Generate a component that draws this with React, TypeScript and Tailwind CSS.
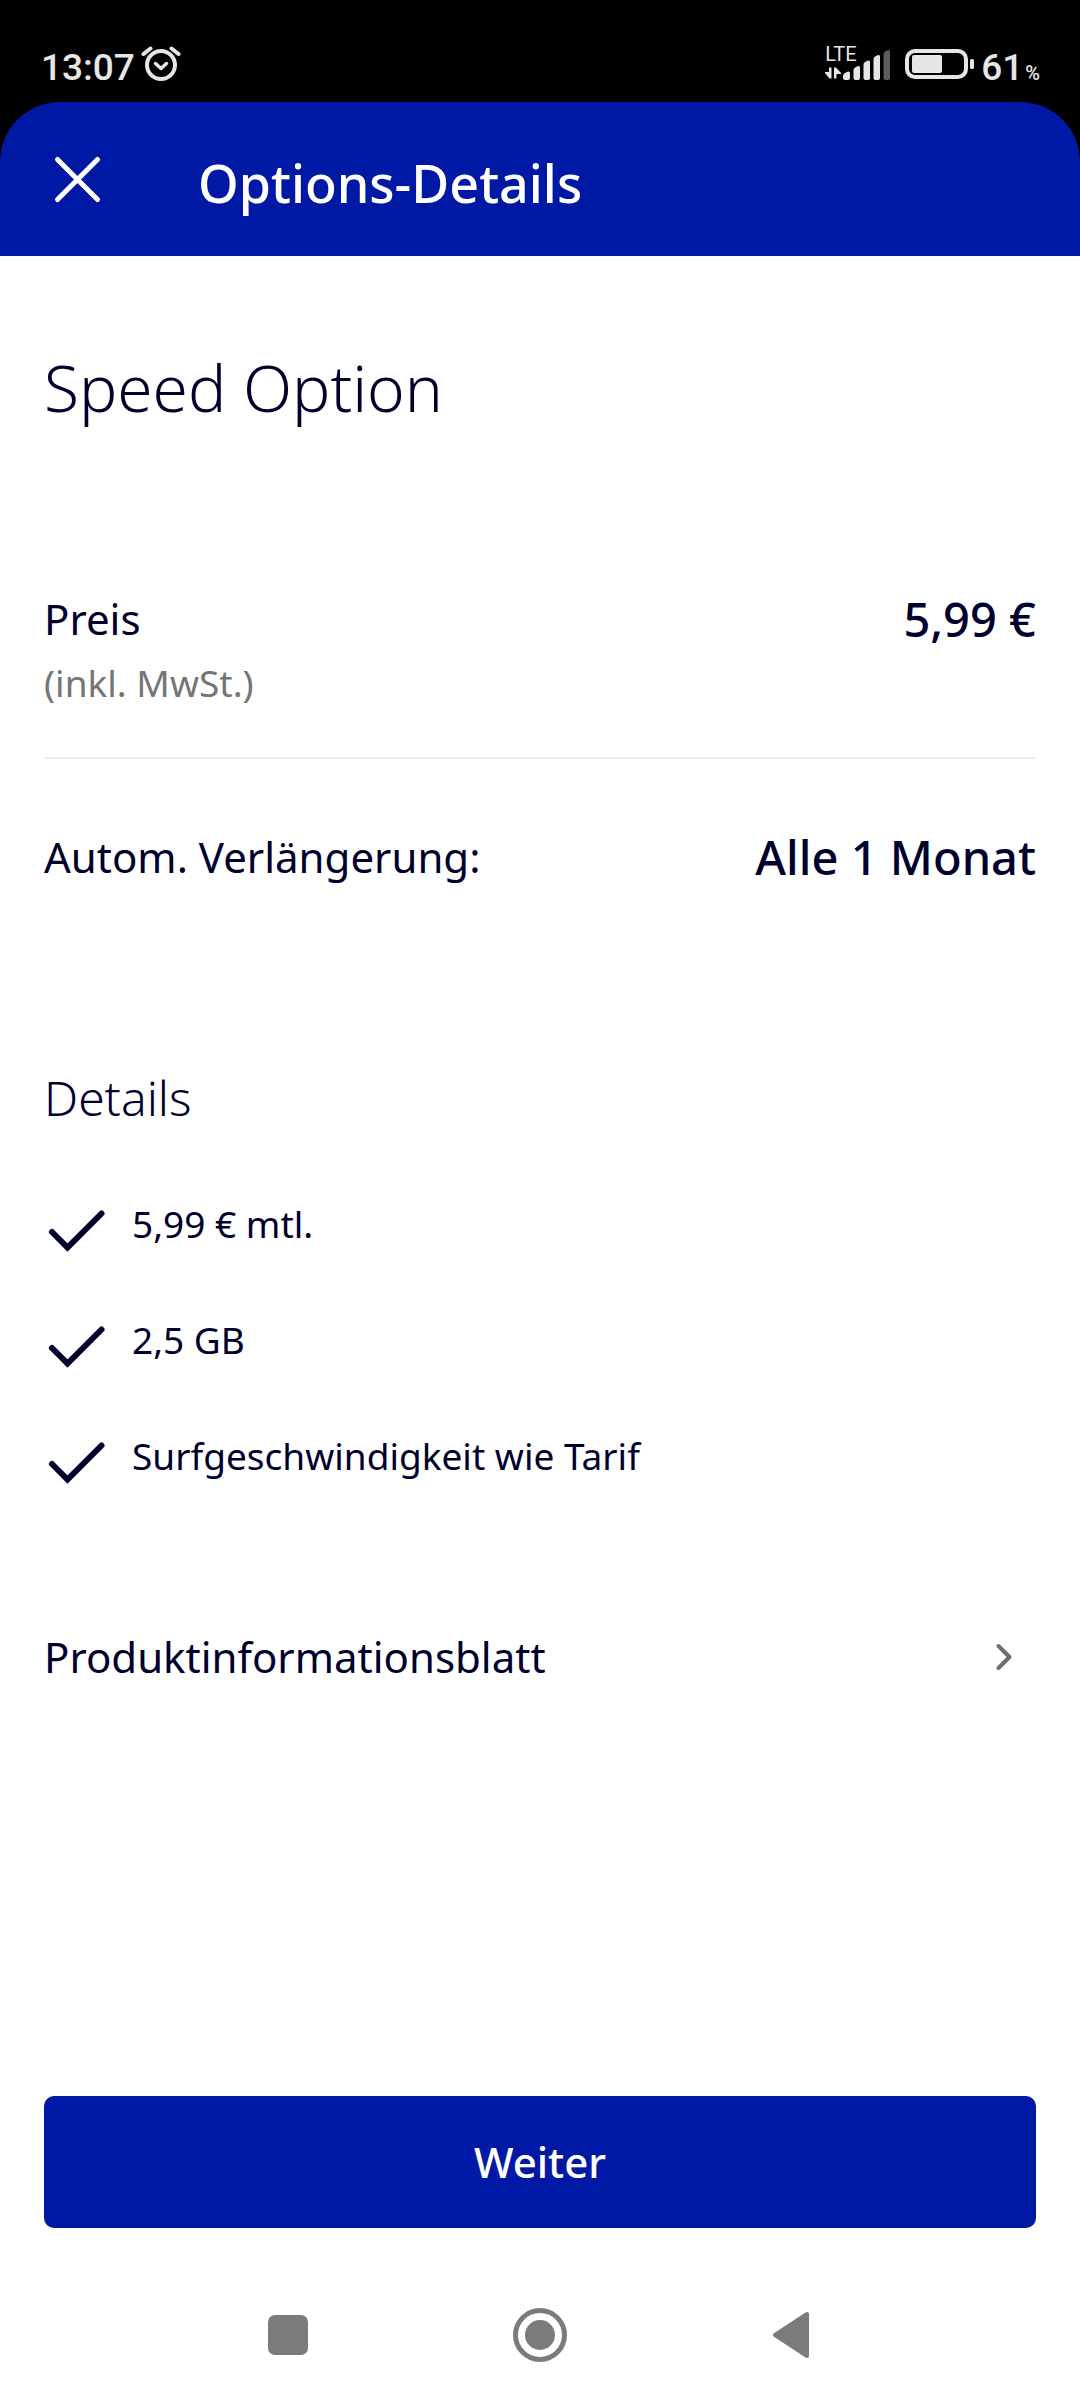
import React from "react";

const details = ["5,99 € mtl.", "2,5 GB", "Surfgeschwindigkeit wie Tarif"];

const AlarmIcon = () => (
  <svg className="h-9 w-10 self-start" viewBox="0 0 40 36" fill="none" stroke="currentColor" strokeLinecap="round" aria-hidden="true">
    <circle cx="20" cy="19" r="14" strokeWidth="4" />
    <path d="M14.500 17.500l5.500 5 5.500-5" strokeWidth="3.500" strokeLinejoin="round" />
    <path d="M2.500 8l7-5.500M37.500 8l-7-5.500" strokeWidth="4" />
  </svg>
);

const SignalIcon = () => (
  <svg className="h-8 w-12" viewBox="0 -1 48 32" fill="currentColor" aria-hidden="true">
    <path d="M0 27q0-2 2-3l3-1.500q2-.5 2 1.500v5q0 2-2 2H2q-2 0-2-2z" />
    <path d="M10.500 21q0-1.500 1.500-2.500l3-1.500q2-.5 2 1.500V29q0 2-2 2h-2.500q-2 0-2-2z" />
    <path d="M20.500 15.500q0-1.500 1.500-2.500l3-1.500q2-.5 2 1.500V29q0 2-2 2h-2.500q-2 0-2-2z" />
    <path d="M30.500 10q0-1.500 1.500-2.500l3-1.500q2-.5 2 1.500V29q0 2-2 2h-2.500q-2 0-2-2z" />
    <path d="M40.500 5q0-1.500 1.500-2.500l3-1.500q2-.5 2 1.500V29q0 2-2 2h-2.500q-2 0-2-2z" opacity=".4" />
  </svg>
);

const DataArrowsIcon = () => (
  <svg className="h-3 w-4" viewBox="0 0 16 12" fill="currentColor" aria-hidden="true">
    <path d="M4 0.500h2.500v11H4.500L0 6V5h4zM9 11.500h2.500V7H16V6L11 0.500H9z" />
  </svg>
);

const BatteryIcon = () => (
  <svg className="h-8 w-[70px]" viewBox="0 0 70 32" fill="none" aria-hidden="true">
    <rect x="2" y="3" width="59" height="26" rx="8" stroke="currentColor" strokeWidth="4" />
    <rect x="7" y="7" width="30" height="18" rx="2" fill="currentColor" />
    <rect x="65" y="11" width="4" height="10" rx="1.500" fill="currentColor" />
  </svg>
);

const CheckIcon = () => (
  <svg className="h-14 w-[62px] shrink-0" viewBox="0 0 62 56" fill="none" stroke="currentColor" strokeWidth="6" strokeLinecap="round" aria-hidden="true">
    <path d="M8 36L23.500 51.500 57.500 17.500" />
  </svg>
);

const StatusBar = () => (
  <div className="flex h-[102px] items-end justify-between pr-10 pb-4 pl-[41px] font-['Roboto',sans-serif] text-[#e6e6e6]">
    <div className="flex gap-1.5">
      <span className="pt-1 text-[37px] leading-9 font-medium">13:07</span>
      <AlarmIcon />
    </div>
    <div className="flex items-end">
      <div className="flex items-end pb-1.5">
        <div className="flex w-[18px] flex-col gap-[3px] pb-px">
          <span className="text-[20px] leading-5">LTE</span>
          <DataArrowsIcon />
        </div>
        <SignalIcon />
      </div>
      <div className="ml-[14px] pb-1.5">
        <BatteryIcon />
      </div>
      <div className="ml-1.5 flex items-baseline gap-0.5">
        <span className="text-[37px] leading-9 font-medium">61</span>
        <span className="text-[20px] leading-5 font-medium">%</span>
      </div>
    </div>
  </div>
);

const App: React.FC = () => {
  return (
    <div className="flex min-h-screen flex-col bg-white font-['Noto_Sans','Open_Sans',sans-serif] text-[#00002d]">
      <div className="bg-black">
        <StatusBar />
        <header className="flex h-[154px] items-center gap-16 rounded-t-[60px] bg-[#0019a5] px-11 text-white">
          <button type="button" aria-label="Schließen" className="flex h-[90px] w-[90px] items-center">
            <svg className="h-[90px] w-16" viewBox="0 0 64 90" fill="none" stroke="currentColor" strokeWidth="5" strokeLinecap="round">
              <path d="M13.500 25.500l40 40M53.500 25.500l-40 40" />
            </svg>
          </button>
          <h1 className="pt-2 text-[52px] leading-[60px] font-medium">Options-Details</h1>
        </header>
      </div>

      <main className="px-11 pt-24">
        <h2 className="text-[64px] leading-[72px] font-light">Speed Option</h2>

        <dl className="mt-[167px]">
          <div className="flex justify-between border-b-2 border-[#eeeeee] pb-[46px]">
            <dt>
              <span className="block text-[42px] leading-14">Preis</span>
              <span className="mt-2 block text-[37px] leading-14 text-[#757575]">(inkl. MwSt.)</span>
            </dt>
            <dd className="text-[47px] leading-14 font-medium">5,99 €</dd>
          </div>
          <div className="flex justify-between pt-[70px]">
            <dt className="text-[42px] leading-14">Autom. Verlängerung:</dt>
            <dd className="text-[47px] leading-14 font-medium">Alle 1 Monat</dd>
          </div>
        </dl>

        <h3 className="mt-[185px] text-[48px] leading-14 font-light">Details</h3>
        <ul className="mt-[70px] flex flex-col gap-[60px]">
          {details.map((item) => (
            <li key={item} className="flex gap-[26px] text-[37px] leading-14">
              <CheckIcon />
              {item}
            </li>
          ))}
        </ul>

        <a href="#produktinformationsblatt" className="mt-[145px] flex items-center justify-between pr-[22px] text-[42px] leading-14">
          Produktinformationsblatt
          <svg className="h-8 w-5" viewBox="0 0 20 32" fill="none" stroke="#6e6e6e" strokeWidth="4" strokeLinecap="round" strokeLinejoin="round" aria-hidden="true">
            <path d="M4.500 5l11 11-11 11" />
          </svg>
        </a>
      </main>

      <footer className="mt-auto pt-16">
        <div className="px-11">
          <button type="button" className="h-[132px] w-full rounded-[10px] bg-[#0019a5] text-[42px] leading-14 font-medium text-white">
            Weiter
          </button>
        </div>
        <nav className="mt-[42px] flex h-[130px] justify-center text-[#7b7b7b]">
          <button type="button" aria-label="Letzte Apps" className="flex w-[252px] items-center justify-center">
            <span className="h-10 w-10 rounded-[7px] bg-current" />
          </button>
          <button type="button" aria-label="Startseite" className="flex w-[252px] items-center justify-center">
            <svg className="h-14 w-14" viewBox="0 0 56 56" fill="none">
              <circle cx="28" cy="28" r="24.500" stroke="currentColor" strokeWidth="5" />
              <circle cx="28" cy="28" r="15" fill="currentColor" />
            </svg>
          </button>
          <button type="button" aria-label="Zurück" className="flex w-[252px] items-center justify-center">
            <svg className="h-12 w-10" viewBox="0 0 40 48" fill="currentColor" stroke="currentColor" strokeWidth="4" strokeLinejoin="round">
              <path d="M35 3v42L3 24z" />
            </svg>
          </button>
        </nav>
      </footer>
    </div>
  );
};

export default App;
